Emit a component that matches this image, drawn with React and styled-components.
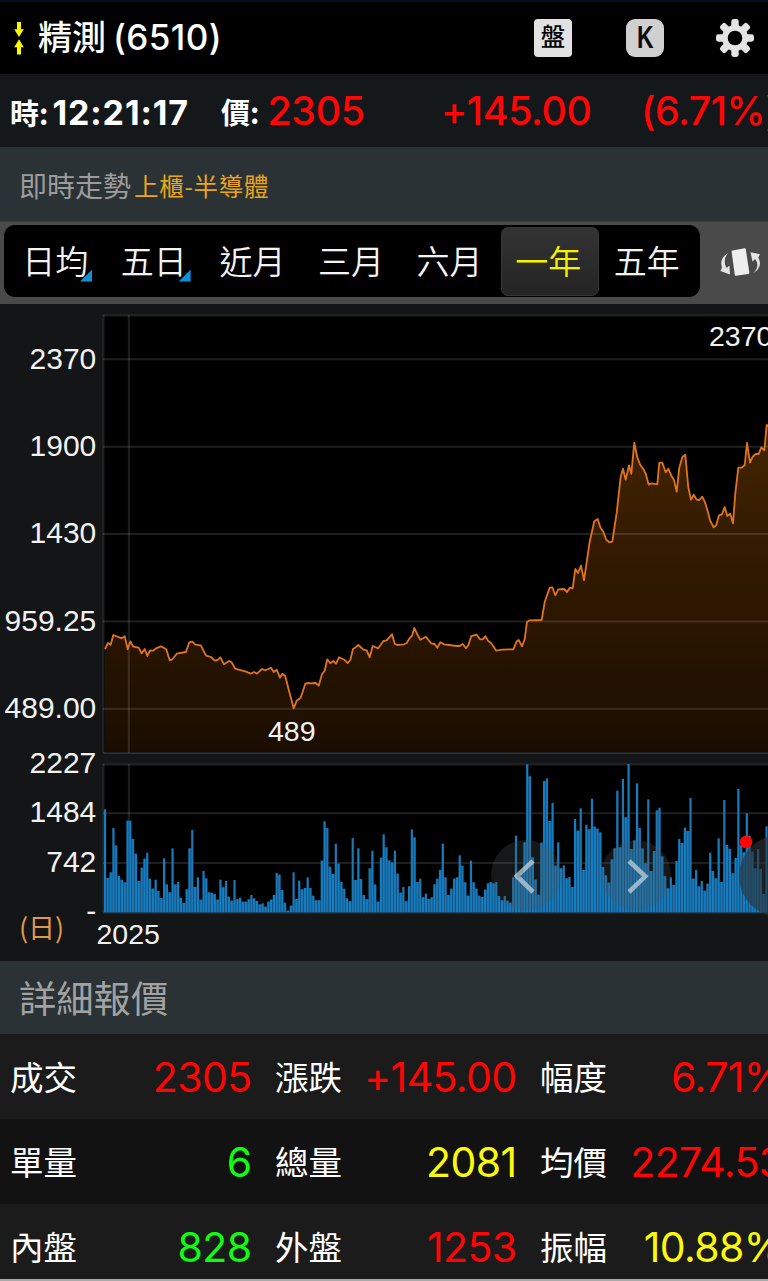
import React from "react";
import styled, { createGlobalStyle } from "styled-components";

const Global = createGlobalStyle`
  * { box-sizing: border-box; }
  body { margin: 0; background: #131517; }
`;

const CJK = `"Noto Sans CJK TC", sans-serif`;
const LATIN = `Inter, "Noto Sans CJK TC", sans-serif`;

const Screen = styled.div`
  width: 768px;
  height: 1281px;
  overflow: hidden;
  display: flex;
  flex-direction: column;
  background: #131517;
  border-bottom: 2px solid #a9a9a9;
  font-family: ${CJK};
  white-space: nowrap;
`;

const Label = styled.span`
  font-family: ${(p) => (p.$latin ? LATIN : CJK)};
  font-size: ${(p) => p.$size}px;
  font-weight: ${(p) => p.$weight || 400};
  letter-spacing: ${(p) => p.$spacing || 0}px;
  color: ${(p) => p.$color || "#fff"};
  line-height: 1;
  padding-top: ${(p) => p.$drop || 0}px;
  padding-bottom: ${(p) => (p.$latin || p.$drop ? 0 : 3)}px;
  flex: none;
`;

const TitleBar = styled.header`
  height: 74px;
  flex: none;
  display: flex;
  align-items: center;
  background: #000;
  border-top: 2px solid #04101c;
  padding: 0 14px 1px;
`;

const TitleText = styled.h1`
  margin: 0 0 0 14px;
  display: flex;
  align-items: center;
  gap: 7px;
  flex: 1;
`;

const Actions = styled.div`
  display: flex;
  align-items: center;
  gap: 54px;

  & > svg {
    margin-left: -2px;
  }
`;

const Badge = styled.button`
  width: 38px;
  height: 38px;
  padding: 0;
  border: 0;
  border-radius: ${(p) => p.$radius}px;
  background: ${(p) => p.$bg};
  display: flex;
  align-items: center;
  justify-content: center;
`;

const CandleLetter = styled.span`
  font: 700 31px/1 "Liberation Sans", sans-serif;
  color: #0a0a0a;
  transform: scaleX(0.74);
`;

const QuoteBar = styled.div`
  height: 73px;
  flex: none;
  display: flex;
  align-items: center;
  background: #14181b;
  padding-left: 10px;
`;

const QuoteCell = styled.div`
  width: ${(p) => p.$width}px;
  flex: none;
  display: flex;
  align-items: center;
  gap: ${(p) => p.$gap || 0}px;
  padding-top: 1px;
`;

const SectionBar = styled.div`
  height: ${(p) => p.$height}px;
  flex: none;
  display: flex;
  align-items: center;
  gap: 3px;
  padding: 4px 0 0 19px;
  background: #2b3235;
`;

const RangeBar = styled.div`
  height: 83px;
  flex: none;
  display: flex;
  align-items: center;
  padding: 0 6px 4px 4px;
  background: #4a4a4a;
  border-top: 1px solid #3c4042;
`;

const Tabs = styled.div`
  width: 696px;
  height: 72px;
  flex: none;
  display: flex;
  align-items: center;
  padding: 0 2px 0 4px;
  border-radius: 11px;
  background: #000;
`;

const Tab = styled.button`
  position: relative;
  flex: 1;
  height: 69px;
  border: 1px solid ${(p) => (p.$active ? "#363636" : "transparent")};
  border-radius: 7px;
  background: ${(p) => (p.$active ? "linear-gradient(#333, #242424)" : "none")};
  color: ${(p) => (p.$active ? "#f6f300" : "#f4f4f4")};
  font: 350 33px/1 ${CJK};
  padding: 0 4px 2px 0;
`;

const Corner = styled.i`
  position: absolute;
  right: 13.5px;
  bottom: 13px;
  width: 12px;
  height: 12px;
  background: #0f8fd8;
  clip-path: polygon(100% 0, 100% 100%, 0 100%);
`;

const RotateButton = styled.button`
  margin: 2px 0 0 18px;
  padding: 0;
  border: 0;
  background: none;
  display: flex;
`;

const ChartPanel = styled.section`
  height: 657px;
  flex: none;
  background: #131517;
`;

const Rows = styled.div`
  flex: 1;
  display: flex;
  flex-direction: column;
`;

const Row = styled.div`
  height: 85px;
  flex: none;
  display: grid;
  grid-template-columns: 265px 265px 267px;
  align-items: center;
  padding-top: 2px;
  background: ${(p) => (p.$alt ? "#121212" : "#1b1b1b")};
`;

const Cell = styled.div`
  display: flex;
  align-items: center;
  justify-content: space-between;
  padding: 0 13.5px 0 10px;
`;

const RED = "#fe0606";
const GREEN = "#12fb12";
const YELLOW = "#fbf90e";

const details = [
  [["成交", "2305", RED], ["漲跌", "+145.00", RED], ["幅度", "6.71%", RED]],
  [["單量", "6", GREEN], ["總量", "2081", YELLOW], ["均價", "2274.53", RED]],
  [["內盤", "828", GREEN], ["外盤", "1253", RED], ["振幅", "10.88%", YELLOW]],
];

const ranges = ["日均", "五日", "近月", "三月", "六月", "一年", "五年"];

// Each segment is [originX, originY, points], with the points in thirds of a pixel.
const segments = [
  [90, 600, "45,147 54,129 62,134 70,105 95,115 104,109 113,148 121,124 130,140 146,143 155,160 164,147 172,168 180,151 190,152 198,145 213,139 229,148 239,181 247,178 260,161 288,156 298,127 307,125 315,133 333,137 348,167 363,171 374,182 383,180 391,172 402,193 417,183 425,187 435,206 468,215 482,221 492,216 501,221 516,207 526,211 543,203 551,216 560,209 570,233 577,221 586,229 597,272 611,325 620,302 632,293 646,251 656,249"],
  [310, 600, "0,250 17,249 26,257 36,223 44,212 52,178 61,190 70,183 78,191 87,172 103,179 113,189 121,180 129,147 137,142 145,135 160,149 170,151 179,172 188,138 205,145 220,123 230,121 246,103 254,131 262,135 282,133 290,129 298,116 306,107 313,84 322,103 331,119 348,110 363,130 374,132 382,143 391,127 402,133 440,138 449,138 458,132 468,145 475,136 484,108 500,104 510,118 518,118 526,109 535,123 543,129 559,152 577,149 598,148"],
  [510, 400, "10,748 20,724 26,720 36,739 44,718 51,665 60,661 95,660 104,606 119,563 127,562 136,586 145,568 162,567 171,576 180,563 188,565 196,507 204,519 213,497 222,541 239,425 253,364 263,357 271,382 280,395 289,419 298,427 307,425 320,338 332,230 339,206 347,239 357,196 364,222 373,128 382,172 391,195 400,207 407,221 416,254 425,250 442,253 448,188 457,188 467,217 475,206 484,227 492,240 500,275 508,203 517,172 526,164 535,262 543,299 551,284 560,299 568,300 577,290 585,307 592,329 601,363 611,382 619,375 627,346 636,343 644,321 652,348 661,341 669,370 676,280 685,203 695,203 704,195 711,129 720,188 728,170 737,162 746,162 754,142 763,151 770,75 780,82"],
];

const linePoints = segments
  .flatMap(([ox, oy, pts]) =>
    pts.split(" ").map((pt) => {
      const [x, y] = pt.split(",").map(Number);
      return `${(ox + x / 3).toFixed(1)},${(oy + y / 3).toFixed(1)}`;
    })
  )
  .join(" ");

// Top edge of every volume bar, in thirds of a pixel below y = 745.
const volumeTops = [
  193, 399, 382, 249, 301, 393, 404, 412, 227, 227, 282, 326, 408, 368, 341, 323, 401, 431, 404, 438,
  459, 340, 418, 442, 310, 418, 411, 458, 474, 433, 310, 255, 426, 397, 464, 378, 400, 442, 443, 447,
  464, 404, 427, 408, 455, 467, 405, 463, 458, 470, 470, 463, 450, 460, 468, 478, 475, 485, 470, 464,
  450, 384, 389, 435, 473, 497, 482, 382, 462, 407, 433, 429, 397, 429, 452, 466, 466, 347, 229, 249,
  365, 387, 296, 356, 411, 431, 460, 469, 279, 405, 310, 402, 450, 463, 370, 317, 418, 470, 338, 268,
  307, 346, 352, 317, 386, 443, 426, 469, 424, 253, 277, 411, 401, 457, 446, 462, 457, 418, 401, 375,
  296, 397, 450, 431, 401, 397, 331, 362, 412, 452, 347, 412, 431, 452, 456, 434, 415, 411, 415, 411,
  453, 466, 453, 467, 473, 397, 272, 400, 385, 292, 58, 94, 337, 404, 449, 293, 108, 100, 228, 174,
  362, 292, 370, 361, 400, 396, 426, 222, 257, 190, 375, 239, 253, 161, 245, 251, 262, 366, 391, 413,
  343, 310, 137, 307, 102, 217, 57, 312, 286, 115, 249, 310, 355, 163, 378, 318, 196, 188, 334, 393,
  430, 397, 420, 348, 282, 294, 248, 258, 159, 401, 375, 424, 408, 437, 416, 323, 378, 400, 280, 411,
  165, 300, 312, 385, 339, 132, 300, 322, 205, 272, 320, 370, 312, 372, 447, 244,
];

// Dim fill joining neighbouring bars, up to the lower of each pair.
const volumeGaps = volumeTops.slice(1).map((t, i) => Math.max(t, volumeTops[i]));

const priceTicks = [
  ["2370", 359.3], ["1900", 446.7], ["1430", 534], ["959.25", 621.5], ["489.00", 708.7],
];
const volumeTicks = [
  ["2227", 764], ["1484", 813.3], ["742", 863], ["-", 912.3],
];

function Chart() {
  const grid = { stroke: "#fff", strokeOpacity: 0.12, strokeWidth: 2 };
  const text = { fill: "#f2f2f2", fontFamily: '"Liberation Sans", sans-serif', fontSize: 30 };
  return (
    <svg width="768" height="657" viewBox="0 304 768 657" display="block">
      <defs>
        <linearGradient id="area" gradientUnits="userSpaceOnUse" x1="0" y1="420" x2="0" y2="753">
          <stop offset="0" stopColor="#432400" />
          <stop offset="0.5" stopColor="#2f1800" />
          <stop offset="1" stopColor="#1a0d00" />
        </linearGradient>
      </defs>
      <rect x="103" y="315" width="670" height="438" fill="#000" />
      <rect x="103" y="764" width="670" height="148" fill="#000" />
      <polygon points={`105,752 ${linePoints} 770,752`} fill="url(#area)" />
      <g {...grid}>
        <path d="M103.5 315V753M103.5 764V912" />
        <path d="M128.8 315V753M128.8 764V912" />
        <path d="M103 315.5H768M103 753H768M103 764.5H768M103 912.5H768" />
        {priceTicks.map(([t, y]) => <path key={t} d={`M103 ${y}H768`} />)}
        <path d="M103 813.3H768M103 863H768" />
      </g>
      <polyline points={linePoints} fill="none" stroke="#e0741d" strokeWidth="1.8" strokeLinejoin="round" />
      {volumeGaps.map((t, i) => (
        <rect key={i} x={105 + i * 2.815} y={745 + t / 3} width="2.815" height={(502 - t) / 3} fill="#123f66" />
      ))}
      {volumeTops.map((t, i) => (
        <rect
          key={i}
          x={105 + i * 2.815 - 1.1}
          y={745 + t / 3}
          width="2.2"
          height={(502 - t) / 3}
          fill={i % 3 === 1 ? "#2076b0" : "#147ec2"}
        />
      ))}
      <circle cx="526" cy="875" r="35" fill="#50545a" fillOpacity="0.27" />
      <circle cx="636" cy="875" r="35" fill="#50545a" fillOpacity="0.27" />
      <circle cx="780" cy="876" r="41" fill="#2c3236" fillOpacity="0.62" />
      <g fill="none" stroke="#c3d5de" strokeOpacity="0.72" strokeWidth="4.6">
        <path d="M533 861L516.8 876L533 892" />
        <path d="M629 861L645.2 876.3L629 892" />
      </g>
      <circle cx="746" cy="842" r="6.3" fill="#ff0505" />
      <g {...text} textAnchor="end">
        {priceTicks.map(([t, y]) => <text key={t} x="96.3" y={y + 9.3}>{t}</text>)}
        {volumeTicks.map(([t, y]) => <text key={t} x="96.3" y={y + 9}>{t}</text>)}
      </g>
      <text {...text} fontSize="28.5" x="268" y="740.5">489</text>
      <text {...text} fontSize="28.5" x="709" y="346">2370</text>
      <text {...text} fontSize="28.5" x="96.5" y="944">2025</text>
      <g fill="#e0984c" fontFamily={CJK} fontSize="27">
        <text x="19" y="938">(</text>
        <text x="28" y="938">日</text>
        <text x="55" y="938">)</text>
      </g>
    </svg>
  );
}

const SwapIcon = () => (
  <svg width="10" height="34" viewBox="14 20 10 34" fill="#fdf900">
    <path d="M17 21h4v7.3h2.8L19 36l-4.8-7.7H17z" />
    <path d="M17 53.5h4v-7.3h2.8L19 38.3l-4.8 7.9H17z" />
  </svg>
);

const GearIcon = () => (
  <svg width="38" height="38" viewBox="-19 -19 38 38">
    <g fill="#e4e4e4">
      {[0, 45, 90, 135].map((a) => (
        <rect key={a} x="-3.7" y="-19" width="7.4" height="38" rx="2.4" transform={`rotate(${a})`} />
      ))}
      <circle r="13" />
    </g>
    <circle r="7.3" fill="#000" />
  </svg>
);

const RotateIcon = () => (
  <svg width="44" height="36" viewBox="718 244 44 36">
    <path d="M732.5 250.4L744.6 248.3Q745.6 248.2 745.8 249.2L749.3 272.6Q749.4 273.7 748.4 273.9L736 275.8Q735 275.9 734.8 274.9L731.6 251.6Q731.5 250.6 732.5 250.4Z" fill="#eee" />
    <g fill="#e4e4e4">
      <path d="M728 253Q719 258.5 722 267.5L720.5 271L730 274.5L729.5 265.5L726.5 268Q722.3 260 728 253Z" />
      <path d="M753 273.5Q763.5 266.5 758.3 257.5L760 254.2L750.5 252.2L752.5 261.5L755.2 259Q760.5 266 753 273.5Z" />
    </g>
  </svg>
);

export default function App() {
  return (
    <Screen>
      <Global />
      <TitleBar>
        <SwapIcon />
        <TitleText>
          <Label $size={34} $weight={500}>精測</Label>
          <Label $latin $size={35} $weight={500} $spacing={0.4}>(6510)</Label>
        </TitleText>
        <Actions>
          <Badge $radius={4} $bg="#e2e2e2">
            <Label $size={24.5} $weight={500} $color="#000">盤</Label>
          </Badge>
          <Badge $radius={9} $bg="#d0d0d0">
            <CandleLetter>K</CandleLetter>
          </Badge>
          <GearIcon />
        </Actions>
      </TitleBar>

      <QuoteBar>
        <QuoteCell $width={211} $gap={4}>
          <Label $size={29} $weight={700} $drop={2}>時:</Label>
          <Label $latin $size={34} $weight={700} $spacing={0.9} $drop={3}>12:21:17</Label>
        </QuoteCell>
        <QuoteCell $width={220} $gap={8}>
          <Label $size={29} $weight={700} $drop={2}>價:</Label>
          <Label $latin $size={39.3} $weight={500} $spacing={-0.3} $color={RED}>2305</Label>
        </QuoteCell>
        <QuoteCell $width={200}>
          <Label $latin $size={39.3} $weight={500} $spacing={-0.4} $color={RED}>+145.00</Label>
        </QuoteCell>
        <QuoteCell $width={150}>
          <Label $latin $size={39.3} $weight={500} $spacing={-0.5} $color={RED}>(6.71%)</Label>
        </QuoteCell>
      </QuoteBar>

      <SectionBar $height={74}>
        <Label $size={28} $color="#9c9c9c">即時走勢</Label>
        <Label $size={24.5} $spacing={0.7} $color="#e9a51c" $drop={1}>上櫃-半導體</Label>
      </SectionBar>

      <RangeBar>
        <Tabs>
          {ranges.map((r, i) => (
            <Tab key={r} $active={i === 5}>
              {r}
              {i < 2 && <Corner />}
            </Tab>
          ))}
        </Tabs>
        <RotateButton aria-label="rotate">
          <RotateIcon />
        </RotateButton>
      </RangeBar>

      <ChartPanel>
        <Chart />
      </ChartPanel>

      <SectionBar $height={73}>
        <Label $size={37.3} $color="#a2a2a2">詳細報價</Label>
      </SectionBar>
      <Rows>
        {details.map((row, i) => (
          <Row key={i} $alt={i === 1}>
            {row.map(([name, value, color]) => (
              <Cell key={name}>
                <Label $size={33.5}>{name}</Label>
                <Label $latin $size={41} $spacing={-0.6} $color={color}>{value}</Label>
              </Cell>
            ))}
          </Row>
        ))}
      </Rows>
    </Screen>
  );
}
